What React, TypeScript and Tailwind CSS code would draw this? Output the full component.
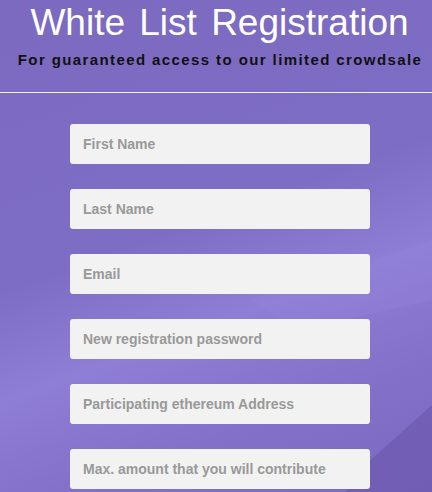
const fields = [
  "First Name",
  "Last Name",
  "Email",
  "New registration password",
  "Participating ethereum Address",
  "Max. amount that you will contribute",
]

export default function App() {
  return (
    <div className="relative h-[492px] w-[432px] overflow-hidden bg-[#7c6bc2] font-['Liberation_Sans',Arial,sans-serif]">
      {/* background shading */}
      <div className="pointer-events-none absolute inset-0 bg-[linear-gradient(160deg,#7b6ac0_0%,#7e6dc4_45%,#8f7ed6_62%,#8370c8_80%,#7b69c0_100%)]" />
      <svg className="pointer-events-none absolute inset-0" width="432" height="492" viewBox="0 0 432 492">
        <polygon points="432,405 365,465 345,492 432,492" fill="#6f5bb0" opacity="0.8" />
        <polygon points="250,300 432,240 432,300 300,330" fill="#9483da" opacity="0.35" />
      </svg>

      <div className="relative flex flex-col">
        <h1 className="pl-[7px] pt-[3px] text-center text-[37px] leading-[40px] [word-spacing:4px] text-white">
          White List Registration
        </h1>
        <p className="mt-[8px] pl-[8px] text-center text-[15px] font-bold leading-[18px] tracking-[1.4px] text-[#111]">
          For guaranteed access to our limited crowdsale
        </p>
        <div className="mt-[23px] h-px bg-white/90" />

        <form className="mt-[31px] flex flex-col items-center gap-[25px] pl-[8px]">
          {fields.map((f) => (
            <input
              key={f}
              placeholder={f}
              className="h-[40px] w-[300px] rounded-[3px] bg-[#f2f2f2] px-[13px] text-[14px] font-bold text-[#999] placeholder:text-[#999] outline-none"
            />
          ))}
        </form>
      </div>
    </div>
  )
}
